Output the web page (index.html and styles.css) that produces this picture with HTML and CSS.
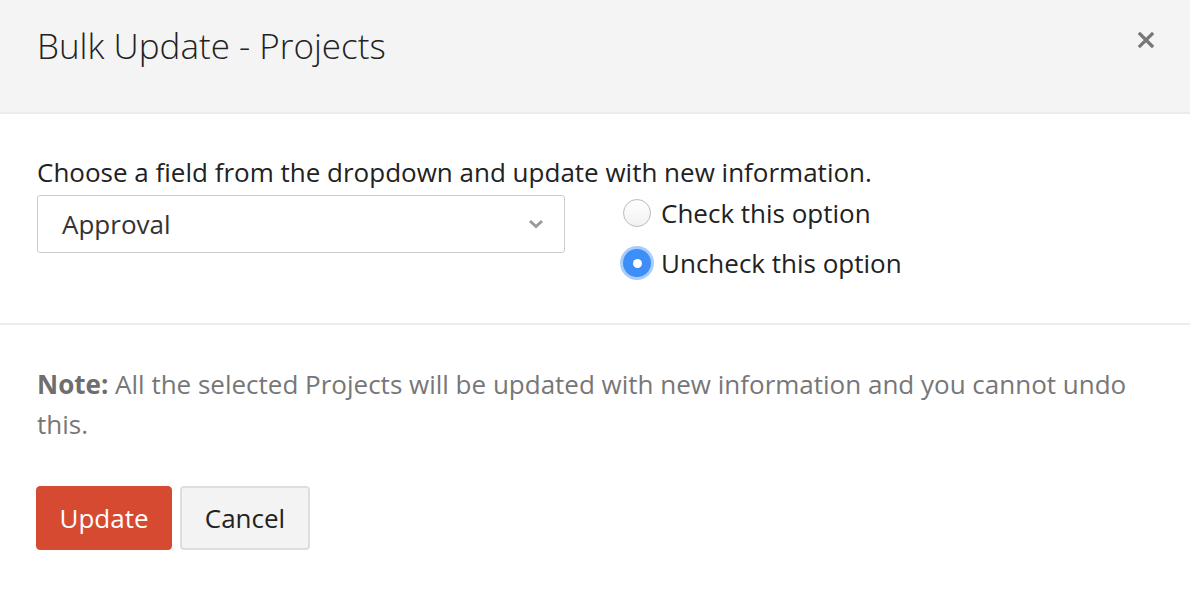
FILE: index.html
```html
<!DOCTYPE html>
<html>
<head>
<meta charset="utf-8">
<link rel="stylesheet" href="styles.css">
</head>
<body>
<div class="modal">
  <div class="modal-header">
    <h1 class="title">Bulk Update - Projects</h1>
    <span class="close" aria-label="Close">
      <svg width="18" height="18" viewBox="0 0 18 18"><path d="M3 3 L15 15 M15 3 L3 15" stroke="#777" stroke-width="3.2" stroke-linecap="square" fill="none"/></svg>
    </span>
  </div>
  <div class="modal-body">
    <p class="label">Choose a field from the dropdown and update with new information.</p>
    <div class="field-row">
      <div class="select">
        <span>Approval</span>
        <svg class="chev" width="16" height="10" viewBox="0 0 16 10"><path d="M2 2 L8 7.5 L14 2" stroke="#9a9a9a" stroke-width="3" fill="none"/></svg>
      </div>
      <div class="radios">
        <label class="radio-row"><span class="radio"></span>Check this option</label>
        <label class="radio-row"><span class="radio checked"></span>Uncheck this option</label>
      </div>
    </div>
  </div>
  <div class="modal-footer">
    <p class="note"><strong class="note-label">Note:</strong> <span>All the selected Projects will be updated with new information and you cannot undo this.</span></p>
    <div class="buttons">
      <button class="btn primary">Update</button>
      <button class="btn secondary">Cancel</button>
    </div>
  </div>
</div>
</body>
</html>
```
FILE: styles.css
```css
* { box-sizing: border-box; }
html, body { margin: 0; padding: 0; background: #fff; }
body {
  font-family: "Open Sans", "Noto Sans", sans-serif;
  color: #222;
  width: 1190px;
  height: 610px;
  overflow: hidden;
}
.modal-header {
  background: #f4f4f4;
  height: 114px;
  border-bottom: 2px solid #ececec;
  display: flex;
  align-items: flex-start;
  justify-content: space-between;
  padding: 0 36px 0 37px;
}
.title {
  margin: 24px 0 0;
  font-weight: 300;
  font-size: 35px;
  line-height: 44px;
  color: #222;
}
.close {
  margin-top: 31px;
  margin-right: -1px;
  display: flex;
}
.modal-body {
  padding: 41px 36px 40px 37px;
  border-bottom: 2px solid #ececec;
}
.label {
  margin: 0;
  font-size: 26px;
  line-height: 34px;
  color: #222;
}
.field-row {
  display: flex;
  align-items: flex-start;
  gap: 58px;
  margin-top: 6px;
}
.select {
  width: 528px;
  height: 58px;
  border: 1px solid #ccc;
  border-radius: 3px;
  display: flex;
  align-items: center;
  justify-content: space-between;
  padding: 0 20px 0 24px;
  font-size: 26px;
  color: #333;
}
.radios {
  display: flex;
  flex-direction: column;
  gap: 10px;
  margin-top: -2px;
}
.radio-row {
  display: flex;
  align-items: center;
  gap: 10px;
  height: 40px;
  font-size: 26px;
  color: #222;
}
.radio {
  width: 28px;
  height: 28px;
  border-radius: 50%;
  border: 1px solid #bbb;
  background: linear-gradient(#fff, #f2f2f2);
  display: inline-block;
  position: relative;
}
.radio.checked {
  border: none;
  background: #3d8ef7;
  box-shadow: 0 0 0 3px #a9cdfb;
}
.radio.checked::after {
  content: "";
  position: absolute;
  width: 9px;
  height: 9px;
  border-radius: 50%;
  background: #fff;
  left: 9.5px;
  top: 9.5px;
}
.modal-footer {
  padding: 39px 36px 0 37px;
}
.note {
  margin: 0;
  font-size: 26px;
  line-height: 40px;
  color: #777;
}
.note-label { color: #6e6e6e; font-weight: 700; }
.buttons {
  display: flex;
  gap: 8px;
  margin-top: 42px;
}
.btn {
  height: 64px;
  font-family: inherit;
  font-size: 26px;
  border-radius: 4px;
  padding: 0;
  cursor: pointer;
}
.btn.primary {
  background: #d54a31;
  border: 1px solid #d54a31;
  color: #fff;
  width: 136px;
  margin-left: -1px;
}
.btn.secondary {
  background: #f3f3f3;
  border: 2px solid #dedede;
  color: #222;
  width: 130px;
}
```
